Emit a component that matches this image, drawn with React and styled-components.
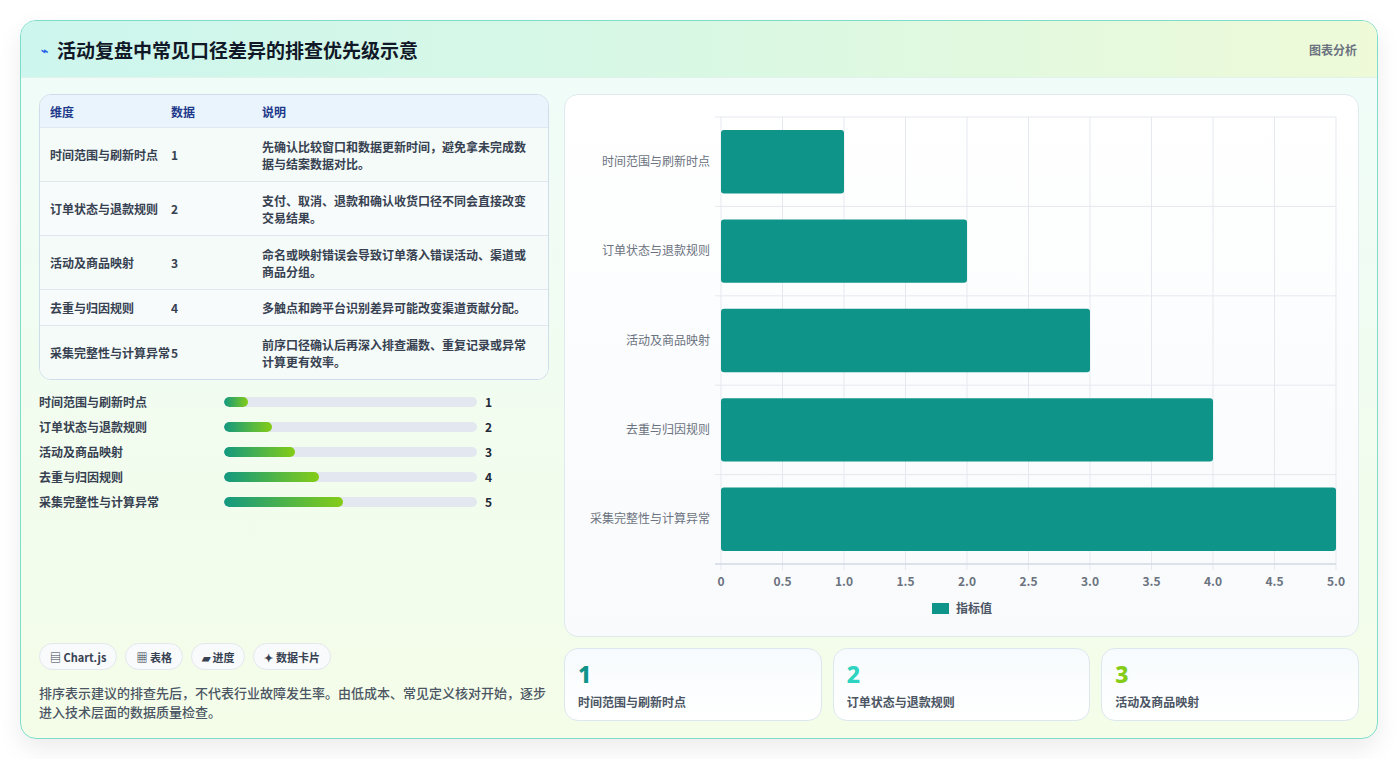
import React from "react";
import styled, { createGlobalStyle } from "styled-components";

const G = createGlobalStyle`
  body{margin:0;background:#fff;font-family:"Noto Sans CJK SC","Noto Sans",sans-serif;}
`;
const Page = styled.div`padding:20px 21px 20px 20px;`;
const Card = styled.div`
  height:719px;box-sizing:border-box;border:1px solid #7edccb;border-radius:16px;overflow:hidden;
  background:linear-gradient(180deg,#effcf9 0%,#f4fde8 100%);
  box-shadow:0 10px 24px rgba(0,0,0,0.08);display:flex;flex-direction:column;
`;
const Header = styled.div`
  height:56px;flex:none;display:flex;align-items:center;justify-content:space-between;padding:0 20px 0 20px;
  background:linear-gradient(90deg,#cdf6ee 0%,#d9f8e4 50%,#eefad8 100%);border-bottom:1px solid #e2f2ea;
`;
const Title = styled.h1`margin:0;font-size:19px;font-weight:700;color:#111827;display:flex;align-items:center;gap:9px;`;
const Icon = styled.span`color:#2563eb;font-size:12px;`;
const HeadTag = styled.span`font-size:12px;font-weight:700;color:#6b7280;`;
const Body = styled.div`flex:1;display:grid;grid-template-columns:510px 795px;gap:15px;padding:16px 18px 18px 18px;`;
const Left = styled.div`display:flex;flex-direction:column;`;
const Table = styled.div`border:1px solid #cfdcea;border-radius:12px;overflow:hidden;background:#f7fbfb;`;
const Row = styled.div`
  display:grid;grid-template-columns:121px 91px 1fr;padding:0 10px;align-items:center;
  min-height:${p=>p.$h}px;font-size:12px;font-weight:700;line-height:17px;color:#374151;
  background:${p=>p.$head?"#eaf4fd":p.$alt?"#f4fbf8":"#f8fbfc"};
  border-top:${p=>p.$first?"none":"1px solid #e0e7ef"};
  ${p=>p.$head&&"color:#1e3a8a;"}
  & > span:last-child{padding-right:6px;}
`;
const Bars = styled.div`display:flex;flex-direction:column;gap:9px;margin-top:13px;`;
const BarRow = styled.div`display:grid;grid-template-columns:185px 253px 1fr;gap:0;align-items:center;height:16px;font-size:12px;font-weight:700;color:#374151;`;
const Track = styled.div`height:10px;border-radius:5px;background:#e3e8f0;overflow:hidden;`;
const Fill = styled.div`height:100%;border-radius:5px;background:linear-gradient(90deg,#139980,#84cc16);`;
const Val = styled.span`padding-left:8px;color:#1f2937;`;
const Spacer = styled.div`flex:1;`;
const Chips = styled.div`display:flex;gap:8px;`;
const Chip = styled.span`
  height:27px;box-sizing:border-box;padding:0 10px;border:1px solid #e3e8ee;border-radius:14px;background:#f8fafb;
  display:flex;align-items:center;gap:4px;font-size:11px;font-weight:700;color:#374151;
`;
const Note = styled.p`margin:13px 0 0;font-size:13px;line-height:19px;font-weight:500;color:#4b5563;`;
const Right = styled.div`display:flex;flex-direction:column;gap:11px;`;
const ChartPanel = styled.div`height:543px;box-sizing:border-box;border:1px solid #dfe9ee;border-radius:14px;background:linear-gradient(180deg,#ffffff,#f8fafc);`;
const Stats = styled.div`display:grid;grid-template-columns:repeat(3,1fr);gap:11px;`;
const Stat = styled.div`height:73px;box-sizing:border-box;border:1px solid #dde7ef;border-radius:14px;background:linear-gradient(180deg,#f7fbfd,#fff);padding:12px 13px;`;
const StatNum = styled.div`font-size:23px;font-weight:800;line-height:26px;color:${p=>p.$c};font-family:"Noto Sans",sans-serif;`;
const StatLabel = styled.div`font-size:12px;font-weight:700;color:#4b5563;margin-top:6px;`;

const data = [
  ["时间范围与刷新时点",1,"先确认比较窗口和数据更新时间，避免拿未完成数据与结案数据对比。"],
  ["订单状态与退款规则",2,"支付、取消、退款和确认收货口径不同会直接改变交易结果。"],
  ["活动及商品映射",3,"命名或映射错误会导致订单落入错误活动、渠道或商品分组。"],
  ["去重与归因规则",4,"多触点和跨平台识别差异可能改变渠道贡献分配。"],
  ["采集完整性与计算异常",5,"前序口径确认后再深入排查漏数、重复记录或异常计算更有效率。"],
];
const heights=[53,53,53,35,53];

function Chart(){
  const x0=156,x1=771,y0=22,y1=469,rh=(y1-y0)/5,k=(x1-x0)/5;
  const ticks=[0,0.5,1,1.5,2,2.5,3,3.5,4,4.5,5];
  return (
    <svg width="793" height="541" style={{display:"block"}} fontFamily="'Noto Sans CJK SC','Noto Sans',sans-serif">
      {ticks.map(t=><line key={t} x1={x0+t*k} x2={x0+t*k} y1={y0} y2={y1+6} stroke="#e5e9ef"/>)}
      {[0,1,2,3,4,5].map(i=><line key={i} x1={x0-6} x2={x1} y1={y0+i*rh} y2={y0+i*rh} stroke="#e5e9ef"/>)}
      <line x1={x0-6} x2={x1} y1={y1} y2={y1} stroke="#c9d1dc"/>
      {data.map((d,i)=>(
        <g key={i}>
          <rect x={x0} y={y0+i*rh+13} width={d[1]*k} height={rh-26} rx="3" fill="#0e9488"/>
          <text x={x0-11} y={y0+i*rh+rh/2+4} textAnchor="end" fontSize="12" fill="#6b7280">{d[0]}</text>
        </g>
      ))}
      {ticks.map(t=><text key={t} x={x0+t*k} y={y1+22} textAnchor="middle" fontSize="12" fontWeight="600" fill="#6b7280">{t===0?"0":t.toFixed(1)}</text>)}
      <rect x="367" y="508" width="17" height="11" fill="#0e9488"/>
      <text x="391" y="518" fontSize="12" fontWeight="600" fill="#4b5563">指标值</text>
    </svg>
  );
}

export default function App(){
  return (<Page><G/>
    <Card>
      <Header>
        <Title><Icon>⌁</Icon>活动复盘中常见口径差异的排查优先级示意</Title>
        <HeadTag>图表分析</HeadTag>
      </Header>
      <Body>
        <Left>
          <Table>
            <Row $head $first $h={32}><span>维度</span><span>数据</span><span>说明</span></Row>
            {data.map((d,i)=>(
              <Row key={i} $alt={i%2===0} $h={heights[i]}><span>{d[0]}</span><span>{d[1]}</span><span>{d[2]}</span></Row>
            ))}
          </Table>
          <Bars>
            {data.map((d,i)=>(
              <BarRow key={i}><span>{d[0]}</span><Track><Fill style={{width:`${d[1]*9.4}%`}}/></Track><Val>{d[1]}</Val></BarRow>
            ))}
          </Bars>
          <Spacer/>
          <Chips>
            <Chip>▤ Chart.js</Chip><Chip>▦ 表格</Chip><Chip>▰ 进度</Chip><Chip>✦ 数据卡片</Chip>
          </Chips>
          <Note>排序表示建议的排查先后，不代表行业故障发生率。由低成本、常见定义核对开始，逐步进入技术层面的数据质量检查。</Note>
        </Left>
        <Right>
          <ChartPanel><Chart/></ChartPanel>
          <Stats>
            <Stat><StatNum $c="#0e9488">1</StatNum><StatLabel>时间范围与刷新时点</StatLabel></Stat>
            <Stat><StatNum $c="#2dd4bf">2</StatNum><StatLabel>订单状态与退款规则</StatLabel></Stat>
            <Stat><StatNum $c="#84cc16">3</StatNum><StatLabel>活动及商品映射</StatLabel></Stat>
          </Stats>
        </Right>
      </Body>
    </Card>
  </Page>);
}
